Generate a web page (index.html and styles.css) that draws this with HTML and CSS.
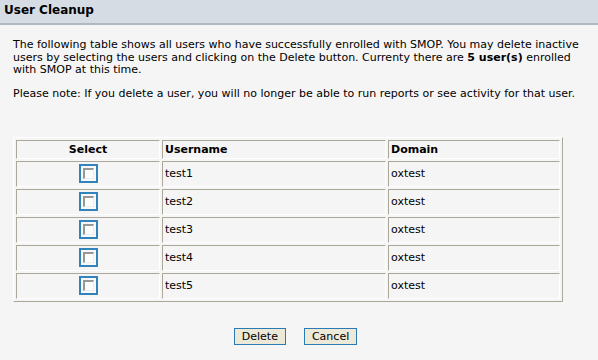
FILE: index.html
```html
<!DOCTYPE html>
<html lang="en">
<head>
    <meta charset="UTF-8">
    <title>User Cleanup</title>
    <link rel="stylesheet" href="styles.css">
</head>
<body>
    <div class="title-bar">User Cleanup</div>

    <div class="content">
        <p class="intro">
            The following table shows all users who have successfully enrolled with SMOP. You may delete inactive<br>
            users by selecting the users and clicking on the Delete button. Currenty there are <b>5 user(s)</b> enrolled<br>
            with SMOP at this time.
        </p>
        <p class="note">Please note: If you delete a user, you will no longer be able to run reports or see activity for that user.</p>

        <table class="users">
            <tr>
                <th class="col-select">Select</th>
                <th class="col-user">Username</th>
                <th class="col-domain">Domain</th>
            </tr>
            <tr>
                <td class="center"><span class="check"><span class="check-box"></span></span></td>
                <td>test1</td>
                <td>oxtest</td>
            </tr>
            <tr>
                <td class="center"><span class="check"><span class="check-box"></span></span></td>
                <td>test2</td>
                <td>oxtest</td>
            </tr>
            <tr>
                <td class="center"><span class="check"><span class="check-box"></span></span></td>
                <td>test3</td>
                <td>oxtest</td>
            </tr>
            <tr>
                <td class="center"><span class="check"><span class="check-box"></span></span></td>
                <td>test4</td>
                <td>oxtest</td>
            </tr>
            <tr>
                <td class="center"><span class="check"><span class="check-box"></span></span></td>
                <td>test5</td>
                <td>oxtest</td>
            </tr>
        </table>

        <div class="actions">
            <button class="btn">Delete</button>
            <button class="btn">Cancel</button>
        </div>
    </div>
</body>
</html>
```

FILE: styles.css
```css
* {
    margin: 0;
    padding: 0;
    box-sizing: border-box;
}

body {
    font-family: 'DejaVu Sans', Verdana, sans-serif;
    font-size: 11px;
    background: #f5f5f5;
    color: #000;
}

.title-bar {
    height: 25px;
    background: #d5dce4;
    border-bottom: 2px solid #b0b8c1;
    padding: 3px 4px 0;
    font-size: 12px;
    font-weight: bold;
    color: #000;
}

.content {
    padding: 14px 0 0 13px;
}

.intro {
    line-height: 12.5px;
    margin-bottom: 10px;
}

.note {
    line-height: 13px;
}

.users {
    margin-top: 37px;
    border-collapse: separate;
    border-spacing: 2px;
    border: 1px solid;
    border-color: #ffffff #aca899 #aca899 #ffffff;
    width: 550px;
}

.users th,
.users td {
    border: 1px solid;
    border-color: #aca899 #ffffff #ffffff #aca899;
    text-align: left;
    padding: 0 2px;
}

.users th {
    height: 19px;
    font-weight: bold;
}

.users td {
    height: 26px;
}

.users .col-select {
    width: 144px;
    text-align: center;
}

.users .col-user {
    width: 224px;
}

.users .col-domain {
    width: 172px;
}

.users td.center {
    text-align: center;
}

.check {
    display: inline-block;
    width: 19px;
    height: 19px;
    border: 2px solid #3282bb;
    background: #f8f8f8;
    vertical-align: middle;
    padding: 2px;
}

.check-box {
    display: block;
    width: 11px;
    height: 11px;
    border-top: 2px solid #979797;
    border-left: 2px solid #979797;
    border-right: 1px solid #ececec;
    border-bottom: 1px solid #ececec;
    background: #fcfcfc;
}

.actions {
    display: flex;
    justify-content: center;
    gap: 18px;
    margin-top: 26px;
    padding-right: 20px;
}

.btn {
    font-family: 'DejaVu Sans', Verdana, sans-serif;
    font-size: 11px;
    height: 17px;
    padding: 0 7px;
    background: #ece9d8;
    border: 1px solid #2a7ab5;
    color: #000;
}
```
